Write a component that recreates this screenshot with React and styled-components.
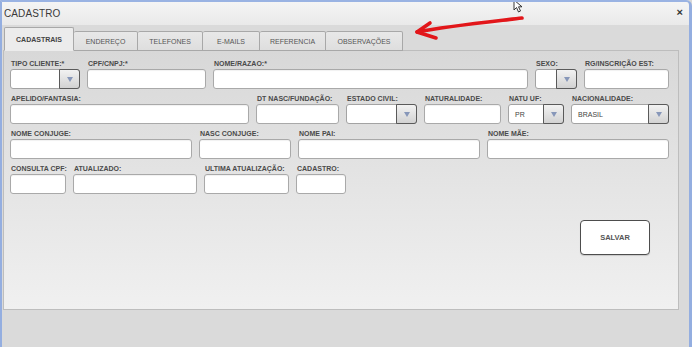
import React from 'react';
import styled, { createGlobalStyle } from 'styled-components';

const GlobalStyle = createGlobalStyle`
  html, body {
    margin: 0;
    padding: 0;
    overflow: hidden;
    background: #d9d9d9;
  }
  * {
    box-sizing: border-box;
  }
`;

const Window = styled.div`
  position: relative;
  width: 692px;
  height: 347px;
  display: flex;
  flex-direction: column;
  background: #dadada;
  border-top: 2px solid #9ab3e3;
  border-left: 2px solid #94aee0;
  border-right: 3px solid #94aee0;
  border-top-right-radius: 6px;
  font-family: "Liberation Sans", Arial, sans-serif;
  overflow: hidden;
`;

const TitleBar = styled.div`
  height: 23px;
  display: flex;
  align-items: center;
  justify-content: space-between;
  padding: 0 6px 0 2px;
  background: linear-gradient(#f5f5f5, #e9e9e9);
`;

const Title = styled.span`
  font-size: 10px;
  color: #3a3a3a;
  letter-spacing: 0.1px;
`;

const Close = styled.span`
  font-size: 11px;
  font-weight: bold;
  color: #333;
  margin-top: -4px;
`;

const Body = styled.div`
  flex: 1;
  display: flex;
  flex-direction: column;
  padding: 0 10px 0 1px;
`;

const TabStrip = styled.div`
  display: flex;
  align-items: flex-end;
  height: 26px;
  padding-left: 1px;
  margin-bottom: -1px;
  position: relative;
  z-index: 1;
`;

const Tab = styled.div`
  width: ${p => p.$w}px;
  height: ${p => (p.$active ? '24px' : '20px')};
  display: flex;
  align-items: center;
  justify-content: center;
  font-size: 7px;
  font-weight: ${p => (p.$active ? 'bold' : 'normal')};
  color: ${p => (p.$active ? '#444' : '#555')};
  background: ${p => (p.$active ? '#ececec' : 'linear-gradient(#e8e8e8, #dedede)')};
  border: 1px solid #a8a8a8;
  border-bottom: ${p => (p.$active ? '1px solid #ececec' : '1px solid #a8a8a8')};
  border-left-width: ${p => (p.$first ? '1px' : '0')};
  border-radius: 2px 2px 0 0;
  white-space: nowrap;
  padding-top: ${p => (p.$active ? '0' : '1px')};
`;

const Panel = styled.div`
  height: 260px;
  display: flex;
  flex-direction: column;
  gap: 5px;
  padding: 8px 0 0 6px;
  border: 1px solid #bdbdbd;
  background: linear-gradient(#d8d8d8, #f0f0f0);
`;

const Row = styled.div`
  display: flex;
  gap: 7px;
`;

const Field = styled.div`
  width: ${p => p.$w}px;
  display: flex;
  flex-direction: column;
`;

const Label = styled.label`
  height: 9px;
  line-height: 9px;
  margin-bottom: 1px;
  padding-left: 1px;
  font-size: 7px;
  font-weight: bold;
  color: #4a4a4a;
  white-space: nowrap;
`;

const Input = styled.div`
  height: 20px;
  background: #fff;
  border: 1px solid #a9a9a9;
  border-radius: 3px;
  box-shadow: inset 0 1px 1px rgba(0, 0, 0, 0.06);
`;

const SelectBox = styled.div`
  height: 20px;
  display: flex;
  background: #fff;
  border: 1px solid #a3a3a3;
  border-radius: 3px;
`;

const SelectValue = styled.span`
  flex: 1;
  display: flex;
  align-items: center;
  padding-left: 6px;
  font-size: 7px;
  color: #444;
`;

const SelectButton = styled.span`
  width: 21px;
  margin: -1px -1px -1px 0;
  display: flex;
  align-items: center;
  justify-content: center;
  border: 1px solid #5a5a5a;
  border-radius: 0 3px 3px 0;
  background: linear-gradient(#f2f2f2, #d2d2d2);

  &::after {
    content: '';
    width: 0;
    height: 0;
    margin-top: 1px;
    border-left: 3px solid transparent;
    border-right: 3px solid transparent;
    border-top: 5px solid #8797b9;
  }
`;

const Footer = styled.div`
  display: flex;
  justify-content: flex-end;
  padding-right: 28px;
  margin-top: 21px;
`;

const SaveButton = styled.button`
  width: 70px;
  height: 35px;
  background: #fff;
  border: 1px solid #4d4d4d;
  border-radius: 4px;
  font-family: "Liberation Sans", Arial, sans-serif;
  font-size: 7.5px;
  font-weight: bold;
  color: #555;
  box-shadow: 0 1px 1px rgba(0, 0, 0, 0.15);
`;

const Overlay = styled.svg`
  position: absolute;
  pointer-events: none;
`;

const tabs = [
  { label: 'CADASTRAIS', w: 70 },
  { label: 'ENDEREÇO', w: 64 },
  { label: 'TELEFONES', w: 65 },
  { label: 'E-MAILS', w: 57 },
  { label: 'REFERENCIA', w: 66 },
  { label: 'OBSERVAÇÕES', w: 77 },
];

const rows = [
  [
    { label: 'TIPO CLIENTE:*', w: 70, select: true },
    { label: 'CPF/CNPJ:*', w: 119 },
    { label: 'NOME/RAZAO:*', w: 315 },
    { label: 'SEXO:', w: 42, select: true },
    { label: 'RG/INSCRIÇÃO EST:', w: 85 },
  ],
  [
    { label: 'APELIDO/FANTASIA:', w: 239 },
    { label: 'DT NASC/FUNDAÇÃO:', w: 83 },
    { label: 'ESTADO CIVIL:', w: 71, select: true },
    { label: 'NATURALIDADE:', w: 77 },
    { label: 'NATU UF:', w: 56, select: true, value: 'PR' },
    { label: 'NACIONALIDADE:', w: 98, select: true, value: 'BRASIL' },
  ],
  [
    { label: 'NOME CONJUGE:', w: 182 },
    { label: 'NASC CONJUGE:', w: 92 },
    { label: 'NOME PAI:', w: 182 },
    { label: 'NOME MÃE:', w: 182 },
  ],
  [
    { label: 'CONSULTA CPF:', w: 56 },
    { label: 'ATUALIZADO:', w: 124 },
    { label: 'ULTIMA ATUALIZAÇÃO:', w: 85 },
    { label: 'CADASTRO:', w: 50 },
  ],
];

const App = () => {
  return (
    <>
      <GlobalStyle />
      <Window>
        <TitleBar>
          <Title>CADASTRO</Title>
          <Close>×</Close>
        </TitleBar>
        <Body>
          <TabStrip>
            {tabs.map((t, i) => (
              <Tab key={t.label} $w={t.w} $active={i === 0} $first={i === 0}>{t.label}</Tab>
            ))}
          </TabStrip>
          <Panel>
            {rows.map((row, ri) => (
              <Row key={ri}>
                {row.map(f => (
                  <Field key={f.label} $w={f.w}>
                    <Label>{f.label}</Label>
                    {f.select ? (
                      <SelectBox>
                        <SelectValue>{f.value}</SelectValue>
                        <SelectButton />
                      </SelectBox>
                    ) : (
                      <Input />
                    )}
                  </Field>
                ))}
              </Row>
            ))}
            <Footer>
              <SaveButton>SALVAR</SaveButton>
            </Footer>
          </Panel>
        </Body>

        {/* hand drawn annotation arrow */}
        <Overlay width="130" height="40" viewBox="0 0 130 40" style={{ left: 406, top: 6 }}>
          <path d="M114 10 C 80 14, 40 18, 9 24" stroke="#e2161a" strokeWidth="3.6" fill="none" strokeLinecap="round" />
          <path d="M22 15 L 9 24 L 28 30" stroke="#e2161a" strokeWidth="3.6" fill="none" strokeLinecap="round" strokeLinejoin="round" />
        </Overlay>

        {/* mouse pointer */}
        <Overlay width="12" height="14" viewBox="0 0 12 14" style={{ left: 511, top: -3 }}>
          <path d="M1 1 L1 11 L3.5 8.5 L5.5 13 L7.5 12 L5.5 7.8 L9 7.8 Z" fill="#fff" stroke="#222" strokeWidth="0.9" strokeLinejoin="round" />
        </Overlay>
      </Window>
    </>
  );
};

export default App;
